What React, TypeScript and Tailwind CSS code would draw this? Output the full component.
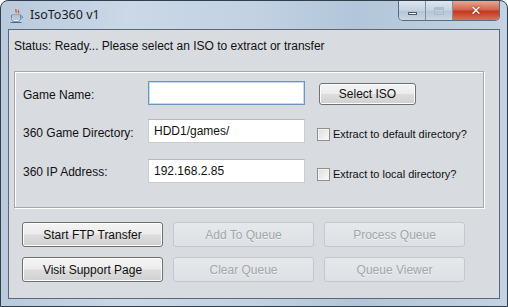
import React from "react";

function CupIcon() {
  return (
    <svg width="16" height="16" viewBox="0 0 16 16">
      <path d="M7 1c-1 1.5 1 2.5 0 4M9.5 2c-1 1.2 1 2 0 3.5" stroke="#d9531e" strokeWidth="1.2" fill="none" />
      <path d="M2.5 7h9v3.5c0 2-2 3.2-4.5 3.2S2.5 12.5 2.5 10.5z" fill="#f4f6f8" stroke="#5a7fa8" strokeWidth="0.9" />
      <path d="M11.5 8h1.3c1.2 0 1.2 2.2 0 2.2h-1.3" stroke="#5a7fa8" strokeWidth="0.9" fill="none" />
      <path d="M3 9h8M3.5 11h7" stroke="#5a7fa8" strokeWidth="0.8" />
      <path d="M1.5 14.5h11" stroke="#4a6c94" strokeWidth="1" />
    </svg>
  );
}

function Btn({ label, disabled = false, className = "" }: { label: string; disabled?: boolean; className?: string }) {
  return disabled ? (
    <div
      className={`flex items-center justify-center rounded-[3px] border border-[#c4c8cd] bg-[linear-gradient(to_bottom,#e6e9ec,#dde0e4)] text-[12px] text-[#a3a6aa] [text-shadow:0_1px_0_#eef0f2] ${className}`}
    >
      {label}
    </div>
  ) : (
    <div
      className={`flex items-center justify-center rounded-[3px] border border-[#707070] bg-[linear-gradient(to_bottom,#f4f4f4_0%,#ececec_48%,#dddddd_52%,#d0d0d0_100%)] text-[12px] text-[#111] shadow-[inset_0_0_0_1px_#fcfcfc] ${className}`}
    >
      {label}
    </div>
  );
}

function Field({ value = "", focused = false }: { value?: string; focused?: boolean }) {
  return (
    <div
      className={`w-[157px] h-[24px] flex items-center pl-[5px] bg-white text-[12px] text-[#111] border ${
        focused
          ? "border-[#6b95c2] shadow-[inset_0_0_0_1px_#c5daf0]"
          : "border-[#c9ccd1] border-t-[#b4b8be]"
      }`}
    >
      {value}
    </div>
  );
}

function Check({ label }: { label: string }) {
  return (
    <div className="flex items-center ml-[12px] mt-[6px]">
      <div className="w-[13px] h-[13px] border border-[#8e8f8f] bg-[linear-gradient(135deg,#dcdcdc,#fbfbfb)] shadow-[inset_0_0_0_1px_#f4f4f4]" />
      <span className="ml-[3px] text-[11px] text-[#111]">{label}</span>
    </div>
  );
}

export default function App() {
  return (
    <div className="w-[508px] h-[307px] flex flex-col rounded-t-[8px] border border-[#333e4c] bg-[linear-gradient(90deg,#b9cadd_0%,#cad8e7_25%,#c2d2e3_50%,#b2c5da_70%,#c4d3e3_100%)] font-['Liberation_Sans',Arial,sans-serif] overflow-hidden">
      <div className="h-[28px] flex justify-between pl-[8px] pr-[7px]">
        <div className="flex items-center h-[28px] pt-[1px]">
          <CupIcon />
          <span className="ml-[5px] text-[12.5px] text-[#1b1b1b] font-['Noto_Sans',sans-serif]">IsoTo360 v1</span>
        </div>
        <div className="flex h-[20px] rounded-b-[5px] border border-t-0 border-[#5d6d80] overflow-hidden">
          <div className="w-[27px] flex items-center justify-center bg-[linear-gradient(to_bottom,#dde6f0,#c3d1e1_50%,#b3c4d7_51%,#c9d6e5)] border-r border-[#7f8ea0]">
            <div className="w-[9px] h-[3px] bg-white border border-[#4b5968] mt-[6px]" />
          </div>
          <div className="w-[27px] flex items-center justify-center bg-[linear-gradient(to_bottom,#dde6f0,#c3d1e1_50%,#b3c4d7_51%,#c9d6e5)] border-r border-[#7f8ea0]">
            <div className="w-[10px] h-[8px] border border-[#a5b2c1] border-t-[3px] opacity-70" />
          </div>
          <div className="w-[46px] flex items-center justify-center bg-[linear-gradient(to_bottom,#e8a695,#d4664f_45%,#c4391f_55%,#d9705a)]">
            <span className="text-white text-[13px] font-bold leading-none [text-shadow:0_0_2px_#6b1a0c] font-['DejaVu_Sans',sans-serif]">✕</span>
          </div>
        </div>
      </div>
      <div className="mx-[7px] mb-[7px] flex-1 border border-[#5b6878] bg-[#d8dbe0] flex flex-col">
        <div className="pt-[9px] pl-[5px] text-[12px] leading-[14px] text-[#111]">
          Status: Ready... Please select an ISO to extract or transfer
        </div>
        <div className="mt-[18px] ml-[5px] w-[470px] h-[137px] border border-[#a3a8ae] shadow-[inset_1px_1px_0_#ffffff,1px_1px_0_#ffffff] flex flex-col pl-[8px]">
          <div className="flex items-center mt-[9px]">
            <span className="w-[125px] pt-[3px] text-[12px] text-[#111]">Game Name:</span>
            <Field focused />
            <Btn label="Select ISO" className="ml-[14px] w-[97px] h-[22px] mt-[2px]" />
          </div>
          <div className="flex items-center mt-[14px]">
            <span className="w-[125px] pt-[3px] text-[12px] text-[#111]">360 Game Directory:</span>
            <Field value="HDD1/games/" />
            <Check label="Extract to default directory?" />
          </div>
          <div className="flex items-center mt-[16px]">
            <span className="w-[125px] pt-[2px] text-[12px] text-[#111]">360 IP Address:</span>
            <Field value="192.168.2.85" />
            <Check label="Extract to local directory?" />
          </div>
        </div>
        <div className="mt-[14px] ml-[13px] grid grid-cols-[141px_141px_141px] auto-rows-[25px] gap-x-[10px] gap-y-[10px]">
          <Btn label="Start FTP Transfer" />
          <Btn label="Add To Queue" disabled />
          <Btn label="Process Queue" disabled />
          <Btn label="Visit Support Page" />
          <Btn label="Clear Queue" disabled />
          <Btn label="Queue Viewer" disabled />
        </div>
      </div>
    </div>
  );
}
